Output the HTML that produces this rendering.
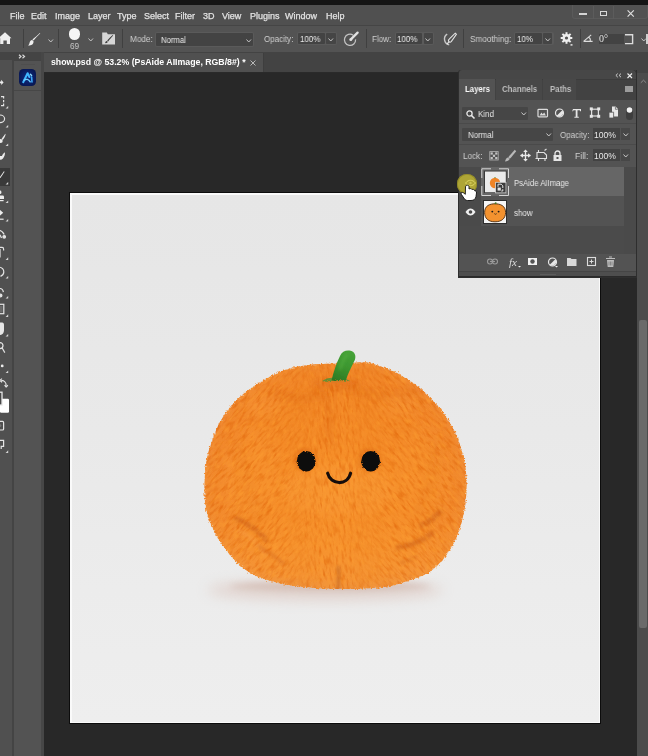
<!DOCTYPE html>
<html><head><meta charset="utf-8">
<style>
*{margin:0;padding:0;box-sizing:border-box}
html,body{width:648px;height:756px;overflow:hidden;background:#282828;font-family:"Liberation Sans",sans-serif;color:#d8d8d8}
.a{position:absolute}
.t{position:absolute;white-space:nowrap;font-size:9px;line-height:9px;color:#d6d6d6;transform-origin:0 0;will-change:transform}
.sep{position:absolute;width:1px;background:#404040}
.box{position:absolute;background:#444444}
svg{position:absolute;overflow:visible}
</style></head><body>
<!-- top black strip -->
<div class="a" style="left:0;top:0;width:648px;height:5px;background:#151515"></div>
<!-- menu bar -->
<div class="a" style="left:0;top:5px;width:648px;height:20px;background:#505050"></div>
<div class="a" style="left:0;top:25px;width:648px;height:1px;background:#454545"></div>
<div class="t" style="left:10px;top:11.5px;color:#e2e2e2;-webkit-text-stroke:0.25px currentColor">File</div>
<div class="t" style="left:31px;top:11.5px;color:#e2e2e2;-webkit-text-stroke:0.25px currentColor">Edit</div>
<div class="t" style="left:55px;top:11.5px;color:#e2e2e2;-webkit-text-stroke:0.25px currentColor">Image</div>
<div class="t" style="left:88px;top:11.5px;color:#e2e2e2;-webkit-text-stroke:0.25px currentColor">Layer</div>
<div class="t" style="left:117px;top:11.5px;color:#e2e2e2;-webkit-text-stroke:0.25px currentColor">Type</div>
<div class="t" style="left:144px;top:11.5px;color:#e2e2e2;-webkit-text-stroke:0.25px currentColor">Select</div>
<div class="t" style="left:175px;top:11.5px;color:#e2e2e2;-webkit-text-stroke:0.25px currentColor">Filter</div>
<div class="t" style="left:203px;top:11.5px;color:#e2e2e2;-webkit-text-stroke:0.25px currentColor">3D</div>
<div class="t" style="left:222px;top:11.5px;color:#e2e2e2;-webkit-text-stroke:0.25px currentColor">View</div>
<div class="t" style="left:250px;top:11.5px;color:#e2e2e2;-webkit-text-stroke:0.25px currentColor">Plugins</div>
<div class="t" style="left:285px;top:11.5px;color:#e2e2e2;-webkit-text-stroke:0.25px currentColor">Window</div>
<div class="t" style="left:326px;top:11.5px;color:#e2e2e2;-webkit-text-stroke:0.25px currentColor">Help</div>
<!-- window controls -->
<div class="a" style="left:572px;top:5px;width:76px;height:14px;border:1px solid #5a5a5a;border-top:none;border-radius:0 0 3px 3px;background:#525252"></div>
<div class="a" style="left:593px;top:6px;width:1px;height:13px;background:#5c5c5c"></div>
<div class="a" style="left:613px;top:6px;width:1px;height:13px;background:#5c5c5c"></div>
<div class="a" style="left:579px;top:13px;width:8px;height:1.8px;background:#d4d4d4"></div>
<div class="a" style="left:600px;top:10.5px;width:7px;height:5px;border:1.2px solid #d8d8d8;border-top-width:1.8px"></div>
<svg style="left:627px;top:9.5px" width="8" height="7"><path d="M0.6 0.4L6.8 6.6M6.8 0.4L0.6 6.6" stroke="#e0e0e0" stroke-width="1.15"/></svg>

<!-- options bar -->
<div class="a" style="left:0;top:26px;width:648px;height:26px;background:#535353"></div>
<svg style="left:0;top:31px" width="12" height="14"><path d="M-1.5 7.2L5 1.3L11.5 7.2L10 7.2L10 13L6.8 13L6.8 9.6L3.4 9.6L3.4 13L0.2 13L0.2 7.2Z" fill="#eeeeee"/></svg>
<div class="sep" style="left:23px;top:29px;height:19px"></div>
<div class="sep" style="left:58px;top:29px;height:19px"></div>
<div class="sep" style="left:122px;top:29px;height:19px"></div>
<div class="sep" style="left:366px;top:29px;height:19px"></div>
<div class="sep" style="left:463px;top:29px;height:19px"></div>
<div class="sep" style="left:580px;top:29px;height:19px"></div>
<svg style="left:28px;top:33px" width="13" height="13"><path d="M12.3 0.3C10.3 2.3 7.3 5.3 5.6 7.6L4.4 6.4C6.6 4.8 9.6 1.9 11.8 -0.1Z" fill="#eeeeee"/><path d="M4.2 6.9C2.5 7 1.8 8.4 1.5 9.9C1.3 11 0.8 11.8 0 12.4C2.3 12.7 5.4 11.9 5.6 8.4Z" fill="#eeeeee"/></svg>
<svg style="left:48px;top:38.5px" width="6" height="4"><path d="M0.5 0.5L2.75 3L5 0.5" stroke="#c4c4c4" stroke-width="1" fill="none"/></svg>
<div class="a" style="left:68.8px;top:28.2px;width:11.6px;height:11.6px;border-radius:50%;background:#f6f6f6"></div>
<div class="t" style="left:70px;top:41.5px;font-size:8.3px;color:#c4c4c4">69</div>
<svg style="left:87.8px;top:38px" width="6" height="4"><path d="M0.5 0.5L2.75 3L5 0.5" stroke="#c4c4c4" stroke-width="1" fill="none"/></svg>
<svg style="left:102px;top:32px" width="14" height="14"><path d="M0.2 0.6L4.8 0.6L5.8 2.2L13 2.2L13 12.4L0.2 12.4Z" fill="#d6d6d6"/><path d="M11.2 3.6C9.4 5.6 7.2 8 6.2 9.4L5.2 8.5C6.6 7.1 8.8 4.8 10.8 3.1Z" fill="#3a3a3a"/><path d="M4.9 9.1C3.9 9.1 3.4 10 3.1 11.1C4.6 11.3 5.7 10.6 5.7 9.7Z" fill="#3a3a3a"/></svg>
<div class="t" style="left:130px;top:35px;font-size:8.6px;color:#cfcfcf;transform:scaleX(0.95)">Mode:</div>
<div class="a" style="left:155px;top:32px;width:99px;height:15px;border-radius:2px;background:#5a5a5a"></div>
<div class="a" style="left:156px;top:33px;width:97px;height:13px;border-radius:1px;background:#434343"></div>
<div class="t" style="left:161px;top:36px;font-size:8.6px;color:#ececec;transform:scaleX(0.9)">Normal</div>
<svg style="left:246px;top:38.5px" width="6" height="4"><path d="M0.5 0.5L2.75 3L5 0.5" stroke="#c4c4c4" stroke-width="1" fill="none"/></svg>
<div class="t" style="left:264px;top:35px;font-size:8.6px;color:#cfcfcf;transform:scaleX(0.93)">Opacity:</div>
<div class="a" style="left:297px;top:32px;width:39.69999999999999px;height:13.200000000000003px;border-radius:2px;background:#5a5a5a"></div><div class="a" style="left:298px;top:33px;width:27px;height:11.200000000000003px;border-radius:1px;background:#434343"></div><div class="a" style="left:326.3px;top:33px;width:9.399999999999988px;height:11.200000000000003px;border-radius:1px;background:#454545"></div><div class="t" style="left:299.5px;top:35px;font-size:8.6px;color:#ececec;transform:scaleX(0.93)">100%</div><svg style="left:327.6px;top:38px" width="6" height="4"><path d="M0.5 0.5L2.75 3L5 0.5" stroke="#c4c4c4" stroke-width="1" fill="none"/></svg>
<svg style="left:343px;top:31px" width="16" height="16"><path d="M10.2 4.2A5.6 5.6 0 1 0 12.6 8.4" stroke="#c4c4c4" stroke-width="1.25" fill="none"/><path d="M14.6 1.6L8.6 7.6" stroke="#e2e2e2" stroke-width="2.3" stroke-linecap="round"/><circle cx="7.8" cy="8.4" r="1.5" fill="#e2e2e2"/></svg>
<div class="t" style="left:371.5px;top:35px;font-size:8.6px;color:#cfcfcf;transform:scaleX(0.93)">Flow:</div>
<div class="a" style="left:394.8px;top:32px;width:39.39999999999998px;height:13.200000000000003px;border-radius:2px;background:#5a5a5a"></div><div class="a" style="left:395.8px;top:33px;width:26.599999999999966px;height:11.200000000000003px;border-radius:1px;background:#434343"></div><div class="a" style="left:423.7px;top:33px;width:9.50000000000001px;height:11.200000000000003px;border-radius:1px;background:#454545"></div><div class="t" style="left:397px;top:35px;font-size:8.6px;color:#ececec;transform:scaleX(0.93)">100%</div><svg style="left:425.0px;top:38px" width="6" height="4"><path d="M0.5 0.5L2.75 3L5 0.5" stroke="#c4c4c4" stroke-width="1" fill="none"/></svg>
<svg style="left:441px;top:31px" width="17" height="16"><path d="M6.2 3.2A5.8 5.8 0 0 0 8.2 13.8" stroke="#c8c8c8" stroke-width="1.4" fill="none"/><path d="M14.2 2.2L15.4 3.4L10.4 10.4C9.8 11.2 9 11.4 8.4 11L7.6 10.2C7.2 9.6 7.4 8.8 8.2 8.2Z" stroke="#e2e2e2" stroke-width="1.1" fill="#535353"/><path d="M8 10.6L5.8 13.4" stroke="#e2e2e2" stroke-width="1.2"/></svg>
<div class="t" style="left:470px;top:35px;font-size:8.6px;color:#cfcfcf;transform:scaleX(0.95)">Smoothing:</div>
<div class="a" style="left:514px;top:32px;width:39.5px;height:13.200000000000003px;border-radius:2px;background:#5a5a5a"></div><div class="a" style="left:515px;top:33px;width:26.899999999999977px;height:11.200000000000003px;border-radius:1px;background:#434343"></div><div class="a" style="left:543.1999999999999px;top:33px;width:9.300000000000022px;height:11.200000000000003px;border-radius:1px;background:#454545"></div><div class="t" style="left:516.6px;top:35px;font-size:8.6px;color:#ececec;transform:scaleX(0.93)">10%</div><svg style="left:544.5px;top:38px" width="6" height="4"><path d="M0.5 0.5L2.75 3L5 0.5" stroke="#c4c4c4" stroke-width="1" fill="none"/></svg>
<svg style="left:560px;top:32px" width="14" height="14"><g fill="#eeeeee"><circle cx="6.5" cy="6" r="4"/><rect x="5.5" y="0.2" width="2" height="11.6"/><rect x="0.7" y="5" width="11.6" height="2"/><rect x="5.5" y="0.2" width="2" height="11.6" transform="rotate(45 6.5 6)"/><rect x="5.5" y="0.2" width="2" height="11.6" transform="rotate(-45 6.5 6)"/></g><circle cx="6.5" cy="6" r="1.6" fill="#535353"/><rect x="10.5" y="12.2" width="2" height="1.4" fill="#eee"/></svg>
<svg style="left:583px;top:34px" width="11" height="9"><path d="M0.6 7.4L9.6 7.4M0.6 7.4L8.2 0.9M5.6 3.2A3.2 3.2 0 0 1 6.9 7.4" stroke="#dcdcdc" stroke-width="1.1" fill="none"/></svg>
<div class="a" style="left:598.5px;top:33.6px;width:25.5px;height:10.4px;background:#434343"></div>
<div class="t" style="left:599px;top:34.2px;font-family:'Liberation Serif',serif;font-size:10px;color:#e6e6e6">0°</div>
<svg style="left:625px;top:34px" width="9" height="11"><path d="M0 0.8L7.6 0.8L7.6 9.6L0 9.6" stroke="#dcdcdc" stroke-width="1.4" fill="none"/></svg>
<svg style="left:641px;top:38px" width="6" height="4"><path d="M0.5 0.5L2.75 3L5 0.5" stroke="#c4c4c4" stroke-width="1" fill="none"/></svg>
<div class="a" style="left:646px;top:34px;width:2px;height:10px;background:#cfcfcf"></div>

<!-- tab strip -->
<div class="a" style="left:0;top:52px;width:648px;height:21px;background:#434343"></div>
<div class="a" style="left:44px;top:53px;width:219px;height:20px;background:#505050"></div><div class="a" style="left:263px;top:53px;width:1px;height:20px;background:#3e3e3e"></div><div class="a" style="left:44px;top:72px;width:592px;height:1px;background:#2a2a2a"></div>
<div class="t" style="left:51px;top:57.6px;font-weight:bold;font-size:8.75px;color:#ffffff">show.psd @ 53.2% (PsAide AIImage, RGB/8#) *</div>
<svg style="left:250px;top:60px" width="6" height="6"><path d="M0.5 0.5L5.5 5.5M5.5 0.5L0.5 5.5" stroke="#b8b8b8" stroke-width="1"/></svg>

<!-- left toolbars -->
<div class="a" style="left:0;top:52px;width:41px;height:8px;background:#444444"></div>
<svg style="left:18px;top:54px" width="8" height="5"><path d="M1 0.8L3 2.5L1 4.2M4.5 0.8L6.5 2.5L4.5 4.2" stroke="#d8d8d8" stroke-width="1.2" fill="none"/></svg>
<div class="a" style="left:0;top:60px;width:12px;height:696px;background:#505050"></div>
<div class="a" style="left:12px;top:60px;width:2px;height:696px;background:#444444"></div>
<div class="a" style="left:14px;top:61px;width:27px;height:695px;background:#535353"></div>
<div class="a" style="left:14px;top:90px;width:27px;height:1px;background:#474747"></div>
<div class="a" style="left:41px;top:52px;width:3px;height:704px;background:#474747"></div>
<!-- left tool icons (partially visible) -->
<div class="a" style="left:0;top:168.4px;width:9.6px;height:17.5px;background:#393939"></div>
<svg style="left:0;top:0;will-change:transform" width="12" height="460">
<g fill="#ececec">
<path d="M-1 81.6H1.2V79.8L3.6 82.4L1.2 85V83.2H-1Z"/>
<path d="M5.2 133.8C4 135.6 2.6 137.6 1.6 139L2.6 140C3.8 138.6 5 136.8 5.6 134.4Z"/><circle cx="0.6" cy="141" r="2.1"/>
<path d="M4.6 152.2C3.4 153.4 2.4 154.6 2 156L-1 156V160L1.8 159.6C3.6 158.2 4.6 156.6 5 153.6Z"/>
<path d="M3.9 171.3L-0.4 177.4L0.4 178L4.6 171.8Z"/>
<rect x="-2" y="190.5" width="3.4" height="3.6" rx="1.4"/><path d="M-2 195.5H3C3.8 195.5 4 196.5 4 197.3V199H-2Z"/><rect x="-2" y="200" width="5.6" height="1.2"/>
<path d="M-1 209L3.2 212.8L-1 216.6L-5 212.8Z"/><rect x="-1" y="218.6" width="4.6" height="1.2"/>
<circle cx="2.2" cy="365.9" r="1.4"/>
<rect x="0" y="398.8" width="9" height="14" rx="1.2" fill="#ffffff"/>
</g>
<g stroke="#e4e4e4" stroke-width="1.2" fill="none">
<path d="M1 96.6H3.6V98.6M3.6 100V102.2M3.6 103.6V105.6H1"/>
<ellipse cx="0" cy="118.8" rx="4.6" ry="3.8"/>
<path d="M-1 230C1 230.5 3 232 4.2 234.5" /><circle cx="4.2" cy="236.8" r="1.3" fill="#e4e4e4"/><path d="M-1 234C0 235 1 236.5 1.5 238"/>
<path d="M-2 247.4H2.2C3.2 247.4 3.6 248.2 3.6 249.2V250.4M0 249V257.4"/>
<path d="M-1 267C1.5 267.4 3.8 269.4 3.8 272C3.8 274 2.5 275.5 0.5 276.4"/>
<path d="M0 288.5C1.5 288.5 3 290 3.4 292.2"/><circle cx="0.5" cy="295.6" r="1.4" fill="#e4e4e4"/>
<rect x="-2" y="304.3" width="5.8" height="9.4"/>
<circle cx="0" cy="345.6" r="3"/><path d="M2.2 348L4.8 352.6"/>
<path d="M1.2 380.4C3.6 380.4 6.2 382 6.2 385.6M-0.2 380.4L2 378.6M-0.2 380.4L2 382.4M6.2 387.2L4.6 385.2M6.2 387.2L7.8 385.2"/>
<rect x="-2" y="421.4" width="5.6" height="8.6" rx="1"/>
<path d="M-2 440.4H3.6V446.4H1.2V449"/>
</g>
<rect x="-3" y="392.2" width="5" height="12.8" stroke="#e8e8e8" stroke-width="1.3" fill="#474747"/>
<rect x="-1" y="306" width="3.6" height="6.4" fill="#6a6a6a"/>
<path d="M-1 322.5H2.2C3.4 322.5 4 323.6 4 325V330C4 333 2.5 335 -1 335Z" fill="#e6e6e6"/>
<circle cx="-0.2" cy="425.6" r="1.5" fill="#777"/>
<path d="M5.6 108.6L8.2 108.6L8.2 106Z" fill="#d4d4d4"/><path d="M5.6 127.6L8.2 127.6L8.2 125Z" fill="#d4d4d4"/><path d="M5.6 146.1L8.2 146.1L8.2 143.5Z" fill="#d4d4d4"/><path d="M5.6 184.6L8.2 184.6L8.2 182Z" fill="#d4d4d4"/><path d="M5.6 203.1L8.2 203.1L8.2 200.5Z" fill="#d4d4d4"/><path d="M5.6 221.6L8.2 221.6L8.2 219Z" fill="#d4d4d4"/><path d="M5.6 259.90000000000003L8.2 259.90000000000003L8.2 257.3Z" fill="#d4d4d4"/><path d="M5.6 278.6L8.2 278.6L8.2 276Z" fill="#d4d4d4"/><path d="M5.6 298.6L8.2 298.6L8.2 296Z" fill="#d4d4d4"/><path d="M5.6 316.90000000000003L8.2 316.90000000000003L8.2 314.3Z" fill="#d4d4d4"/><path d="M5.6 336.6L8.2 336.6L8.2 334Z" fill="#d4d4d4"/><path d="M5.6 373.1L8.2 373.1L8.2 370.5Z" fill="#d4d4d4"/><path d="M5.6 452.90000000000003L8.2 452.90000000000003L8.2 450.3Z" fill="#d4d4d4"/>
</svg>
<!-- AI plugin icon -->
<div class="a" style="left:19px;top:69px;width:17px;height:17px;border-radius:4.5px;background:radial-gradient(circle at 50% 50%,#0f2a80 0%,#0a1d62 55%,#061244 100%)"></div>
<div class="a" style="left:21px;top:64px;width:14px;height:1px;background:#4e4e4e"></div>
<svg style="left:19px;top:69px" width="17" height="17"><path d="M4.2 13.2L8.6 4.2L10.4 8" stroke="#3fb6ff" stroke-width="2" fill="none" stroke-linecap="round" stroke-linejoin="round"/><path d="M5.2 11.2C7.5 9.8 9.5 10 11.2 12.8" stroke="#6fd0ff" stroke-width="1.4" fill="none" stroke-linecap="round"/><path d="M12.6 8L13 13" stroke="#3aa8f8" stroke-width="1.6" stroke-linecap="round"/><path d="M11.4 5.2L12.6 6.4" stroke="#8fdcff" stroke-width="1.4" stroke-linecap="round"/></svg>
<!-- canvas -->
<div class="a" style="left:69px;top:192px;width:532px;height:532px;background:#0c0c0c"></div>
<div class="a" style="left:70px;top:193px;width:530px;height:530px;background:#fafafa"></div>
<div class="a" style="left:72px;top:195px;width:527px;height:527px;background:linear-gradient(180deg,#e6e6e6 0%,#e9e9e9 45%,#ececec 75%,#eeeeee 100%)"></div>
<!-- orange plush -->
<svg style="left:72px;top:195px" width="527" height="527" viewBox="72 195 527 527">
<defs>
<radialGradient id="gBody" gradientUnits="userSpaceOnUse" cx="335" cy="490" r="150" fx="335" fy="480">
<stop offset="0" stop-color="#f7922c"/><stop offset="0.5" stop-color="#f58e2a"/><stop offset="0.82" stop-color="#f38c2e"/><stop offset="1" stop-color="#f08c36"/>
</radialGradient>
<linearGradient id="gLow" gradientUnits="userSpaceOnUse" x1="0" y1="360" x2="0" y2="590">
<stop offset="0" stop-color="#ec7a1c" stop-opacity="0.35"/><stop offset="0.35" stop-color="#ee7c20" stop-opacity="0.2"/><stop offset="0.55" stop-color="#f48a2c" stop-opacity="0"/><stop offset="0.8" stop-color="#f99c36" stop-opacity="0.3"/><stop offset="1" stop-color="#f5a048" stop-opacity="0.45"/>
</linearGradient>
<linearGradient id="gSide" gradientUnits="userSpaceOnUse" x1="205" y1="0" x2="466" y2="0">
<stop offset="0" stop-color="#e06a1a" stop-opacity="0.45"/><stop offset="0.18" stop-color="#e06a1a" stop-opacity="0"/><stop offset="0.82" stop-color="#e06a1a" stop-opacity="0"/><stop offset="1" stop-color="#e06a1a" stop-opacity="0.45"/>
</linearGradient>
<filter id="fFuzz" x="-5%" y="-5%" width="110%" height="110%">
<feTurbulence type="fractalNoise" baseFrequency="0.6" numOctaves="2" seed="3" result="n"/>
<feDisplacementMap in="SourceGraphic" in2="n" scale="5" xChannelSelector="R" yChannelSelector="G" result="d"/>
<feGaussianBlur in="d" stdDeviation="0.6"/>
</filter>
<filter id="fTex" x="0" y="0" width="100%" height="100%" color-interpolation-filters="sRGB">
<feTurbulence type="fractalNoise" baseFrequency="0.1 0.38" numOctaves="3" seed="7"/>
<feColorMatrix type="matrix" values="0 0 0 0 0.86  0 0 0 0 0.36  0 0 0 0 0.0  2.4 0 0 0 -1.1"/>
</filter>
<filter id="fTex2" x="0" y="0" width="100%" height="100%" color-interpolation-filters="sRGB">
<feTurbulence type="fractalNoise" baseFrequency="0.12 0.3" numOctaves="3" seed="11"/>
<feColorMatrix type="matrix" values="0 0 0 0 1  0 0 0 0 0.64  0 0 0 0 0.2  2.4 0 0 0 -1.15"/>
</filter>
<filter id="fBlur3" filterUnits="userSpaceOnUse" x="150" y="300" width="400" height="350"><feGaussianBlur stdDeviation="3"/></filter>
<filter id="fBlur5" filterUnits="userSpaceOnUse" x="150" y="300" width="400" height="350"><feGaussianBlur stdDeviation="5"/></filter>
<filter id="fBlur2" filterUnits="userSpaceOnUse" x="150" y="300" width="400" height="350"><feGaussianBlur stdDeviation="1.6"/></filter>
<filter id="fBlur8" filterUnits="userSpaceOnUse" x="100" y="450" width="500" height="250"><feGaussianBlur stdDeviation="7"/></filter>
<filter id="fBlurEdge" filterUnits="userSpaceOnUse" x="150" y="300" width="400" height="350"><feGaussianBlur stdDeviation="0.7"/></filter>
<linearGradient id="gStem" gradientUnits="userSpaceOnUse" x1="350" y1="351" x2="338" y2="381">
<stop offset="0" stop-color="#46a238"/><stop offset="0.5" stop-color="#3c962f"/><stop offset="1" stop-color="#2e7a24"/>
</linearGradient>
<filter id="fEye" x="-20%" y="-20%" width="140%" height="140%">
<feTurbulence type="fractalNoise" baseFrequency="0.9" numOctaves="1" seed="5" result="n"/>
<feDisplacementMap in="SourceGraphic" in2="n" scale="3.2" xChannelSelector="R" yChannelSelector="G" result="d"/>
<feGaussianBlur in="d" stdDeviation="0.75"/>
</filter>
<linearGradient id="gmL" gradientUnits="userSpaceOnUse" x1="200" y1="0" x2="470" y2="0"><stop offset="0" stop-color="#fff"/><stop offset="0.3" stop-color="#fff"/><stop offset="0.45" stop-color="#000"/></linearGradient>
<linearGradient id="gmC" gradientUnits="userSpaceOnUse" x1="200" y1="0" x2="470" y2="0"><stop offset="0.3" stop-color="#000"/><stop offset="0.45" stop-color="#fff"/><stop offset="0.55" stop-color="#fff"/><stop offset="0.7" stop-color="#000"/></linearGradient>
<linearGradient id="gmR" gradientUnits="userSpaceOnUse" x1="200" y1="0" x2="470" y2="0"><stop offset="0.55" stop-color="#000"/><stop offset="0.7" stop-color="#fff"/><stop offset="1" stop-color="#fff"/></linearGradient>
<mask id="mL" maskUnits="userSpaceOnUse" x="150" y="300" width="400" height="350"><rect x="150" y="300" width="400" height="350" fill="url(#gmL)"/></mask>
<mask id="mC" maskUnits="userSpaceOnUse" x="150" y="300" width="400" height="350"><rect x="150" y="300" width="400" height="350" fill="url(#gmC)"/></mask>
<mask id="mR" maskUnits="userSpaceOnUse" x="150" y="300" width="400" height="350"><rect x="150" y="300" width="400" height="350" fill="url(#gmR)"/></mask>
<clipPath id="cBody"><path d="M345.0 363.5 C352.2 363.2 359.2 361.8 365.0 362.2 C370.8 362.6 374.9 364.5 380.0 366.2 C385.1 367.9 390.2 369.7 395.4 372.3 C400.5 374.9 406.3 378.5 410.9 381.6 C415.5 384.7 419.3 387.5 423.2 390.9 C427.1 394.2 430.6 398.1 434.0 401.7 C437.4 405.3 440.5 408.6 443.3 412.5 C446.1 416.4 448.7 420.7 451.0 424.8 C453.3 428.9 455.4 432.8 457.2 437.2 C459.0 441.6 460.5 446.5 461.8 451.0 C463.1 455.5 464.2 459.2 465.0 464.0 C465.8 468.8 466.3 474.5 466.5 480.0 C466.7 485.5 466.6 491.1 466.1 497.0 C465.6 502.9 464.7 509.4 463.3 515.6 C461.9 521.8 460.0 528.5 457.8 534.0 C455.6 539.5 453.5 543.9 450.4 548.9 C447.3 553.9 443.6 559.4 439.3 563.7 C435.0 568.0 430.3 571.7 424.4 574.8 C418.5 577.9 410.8 580.2 404.0 582.2 C397.2 584.2 392.7 585.9 383.7 587.0 C374.7 588.1 361.4 588.9 350.0 589.0 C338.6 589.1 324.6 588.5 315.0 587.9 C305.4 587.3 299.1 586.6 292.2 585.6 C285.3 584.6 279.8 583.4 273.6 581.7 C267.4 580.0 260.5 578.2 255.1 575.6 C249.7 573.0 245.3 569.6 241.2 566.3 C237.1 562.9 233.7 559.4 230.4 555.5 C227.1 551.6 224.0 547.4 221.2 543.1 C218.4 538.9 215.7 534.5 213.5 530.0 C211.3 525.5 209.2 521.0 207.8 516.0 C206.4 511.0 205.3 505.7 204.8 500.0 C204.3 494.3 204.4 487.8 204.6 482.0 C204.8 476.2 205.1 470.7 205.8 465.4 C206.5 460.1 207.8 454.2 208.9 450.0 C210.0 445.8 211.0 443.9 212.3 440.2 C213.7 436.5 215.2 431.8 217.0 427.9 C218.8 424.0 220.8 420.7 223.1 417.1 C225.4 413.5 227.8 409.9 230.9 406.3 C234.0 402.7 237.8 398.9 241.7 395.5 C245.5 392.1 249.4 389.3 254.0 386.2 C258.6 383.1 264.2 379.7 269.4 377.0 C274.5 374.3 279.8 371.8 284.9 370.0 C290.0 368.2 293.8 367.2 300.0 366.2 C306.2 365.2 314.5 364.4 322.0 364.0 C329.5 363.6 337.8 363.8 345.0 363.5Z"/></clipPath>
</defs>
<ellipse cx="325" cy="590" rx="118" ry="10" fill="#d0b0a4" opacity="0.45" filter="url(#fBlur8)"/>
<ellipse cx="330" cy="586" rx="100" ry="4.5" fill="#b88a78" opacity="0.3" filter="url(#fBlur3)"/>
<g filter="url(#fFuzz)">
<path d="M345.0 363.5 C352.2 363.2 359.2 361.8 365.0 362.2 C370.8 362.6 374.9 364.5 380.0 366.2 C385.1 367.9 390.2 369.7 395.4 372.3 C400.5 374.9 406.3 378.5 410.9 381.6 C415.5 384.7 419.3 387.5 423.2 390.9 C427.1 394.2 430.6 398.1 434.0 401.7 C437.4 405.3 440.5 408.6 443.3 412.5 C446.1 416.4 448.7 420.7 451.0 424.8 C453.3 428.9 455.4 432.8 457.2 437.2 C459.0 441.6 460.5 446.5 461.8 451.0 C463.1 455.5 464.2 459.2 465.0 464.0 C465.8 468.8 466.3 474.5 466.5 480.0 C466.7 485.5 466.6 491.1 466.1 497.0 C465.6 502.9 464.7 509.4 463.3 515.6 C461.9 521.8 460.0 528.5 457.8 534.0 C455.6 539.5 453.5 543.9 450.4 548.9 C447.3 553.9 443.6 559.4 439.3 563.7 C435.0 568.0 430.3 571.7 424.4 574.8 C418.5 577.9 410.8 580.2 404.0 582.2 C397.2 584.2 392.7 585.9 383.7 587.0 C374.7 588.1 361.4 588.9 350.0 589.0 C338.6 589.1 324.6 588.5 315.0 587.9 C305.4 587.3 299.1 586.6 292.2 585.6 C285.3 584.6 279.8 583.4 273.6 581.7 C267.4 580.0 260.5 578.2 255.1 575.6 C249.7 573.0 245.3 569.6 241.2 566.3 C237.1 562.9 233.7 559.4 230.4 555.5 C227.1 551.6 224.0 547.4 221.2 543.1 C218.4 538.9 215.7 534.5 213.5 530.0 C211.3 525.5 209.2 521.0 207.8 516.0 C206.4 511.0 205.3 505.7 204.8 500.0 C204.3 494.3 204.4 487.8 204.6 482.0 C204.8 476.2 205.1 470.7 205.8 465.4 C206.5 460.1 207.8 454.2 208.9 450.0 C210.0 445.8 211.0 443.9 212.3 440.2 C213.7 436.5 215.2 431.8 217.0 427.9 C218.8 424.0 220.8 420.7 223.1 417.1 C225.4 413.5 227.8 409.9 230.9 406.3 C234.0 402.7 237.8 398.9 241.7 395.5 C245.5 392.1 249.4 389.3 254.0 386.2 C258.6 383.1 264.2 379.7 269.4 377.0 C274.5 374.3 279.8 371.8 284.9 370.0 C290.0 368.2 293.8 367.2 300.0 366.2 C306.2 365.2 314.5 364.4 322.0 364.0 C329.5 363.6 337.8 363.8 345.0 363.5Z" fill="url(#gBody)"/>
</g>
<g clip-path="url(#cBody)">
<rect x="190" y="350" width="290" height="250" fill="url(#gLow)"/>
<rect x="190" y="350" width="290" height="250" fill="url(#gSide)" opacity="0.2"/>
<!-- edge darkening -->
<path d="M345.0 363.5 C352.2 363.2 359.2 361.8 365.0 362.2 C370.8 362.6 374.9 364.5 380.0 366.2 C385.1 367.9 390.2 369.7 395.4 372.3 C400.5 374.9 406.3 378.5 410.9 381.6 C415.5 384.7 419.3 387.5 423.2 390.9 C427.1 394.2 430.6 398.1 434.0 401.7 C437.4 405.3 440.5 408.6 443.3 412.5 C446.1 416.4 448.7 420.7 451.0 424.8 C453.3 428.9 455.4 432.8 457.2 437.2 C459.0 441.6 460.5 446.5 461.8 451.0 C463.1 455.5 464.2 459.2 465.0 464.0 C465.8 468.8 466.3 474.5 466.5 480.0 C466.7 485.5 466.6 491.1 466.1 497.0 C465.6 502.9 464.7 509.4 463.3 515.6 C461.9 521.8 460.0 528.5 457.8 534.0 C455.6 539.5 453.5 543.9 450.4 548.9 C447.3 553.9 443.6 559.4 439.3 563.7 C435.0 568.0 430.3 571.7 424.4 574.8 C418.5 577.9 410.8 580.2 404.0 582.2 C397.2 584.2 392.7 585.9 383.7 587.0 C374.7 588.1 361.4 588.9 350.0 589.0 C338.6 589.1 324.6 588.5 315.0 587.9 C305.4 587.3 299.1 586.6 292.2 585.6 C285.3 584.6 279.8 583.4 273.6 581.7 C267.4 580.0 260.5 578.2 255.1 575.6 C249.7 573.0 245.3 569.6 241.2 566.3 C237.1 562.9 233.7 559.4 230.4 555.5 C227.1 551.6 224.0 547.4 221.2 543.1 C218.4 538.9 215.7 534.5 213.5 530.0 C211.3 525.5 209.2 521.0 207.8 516.0 C206.4 511.0 205.3 505.7 204.8 500.0 C204.3 494.3 204.4 487.8 204.6 482.0 C204.8 476.2 205.1 470.7 205.8 465.4 C206.5 460.1 207.8 454.2 208.9 450.0 C210.0 445.8 211.0 443.9 212.3 440.2 C213.7 436.5 215.2 431.8 217.0 427.9 C218.8 424.0 220.8 420.7 223.1 417.1 C225.4 413.5 227.8 409.9 230.9 406.3 C234.0 402.7 237.8 398.9 241.7 395.5 C245.5 392.1 249.4 389.3 254.0 386.2 C258.6 383.1 264.2 379.7 269.4 377.0 C274.5 374.3 279.8 371.8 284.9 370.0 C290.0 368.2 293.8 367.2 300.0 366.2 C306.2 365.2 314.5 364.4 322.0 364.0 C329.5 363.6 337.8 363.8 345.0 363.5Z" fill="none" stroke="#f5a050" stroke-width="8" opacity="0.3" filter="url(#fBlur5)"/>
<!-- light face region -->
<ellipse cx="338" cy="490" rx="58" ry="26" fill="#fa9e3c" opacity="0.4" filter="url(#fBlur5)"/>
<ellipse cx="250" cy="470" rx="30" ry="45" fill="#f99a3a" opacity="0.25" filter="url(#fBlur5)"/>
<ellipse cx="425" cy="470" rx="28" ry="45" fill="#f99a3a" opacity="0.2" filter="url(#fBlur5)"/>
<!-- top segment shading -->
<path d="M270 392C286 398 308 400 326 394" stroke="#da6414" stroke-width="7" fill="none" opacity="0.35" filter="url(#fBlur3)"/>
<path d="M352 390C370 396 395 396 420 390" stroke="#da6414" stroke-width="7" fill="none" opacity="0.3" filter="url(#fBlur3)"/>
<path d="M330 396C329 410 328 425 330 445" stroke="#da6414" stroke-width="6" fill="none" opacity="0.3" filter="url(#fBlur3)"/>
<ellipse cx="336" cy="384" rx="24" ry="7" fill="#d86414" opacity="0.35" filter="url(#fBlur3)"/>
<ellipse cx="262" cy="405" rx="22" ry="12" fill="#f99c40" opacity="0.3" filter="url(#fBlur5)"/>
<ellipse cx="400" cy="405" rx="22" ry="12" fill="#f99c40" opacity="0.25" filter="url(#fBlur5)"/>
<path d="M236 440C244 470 250 500 262 520" stroke="#dc6a18" stroke-width="6" fill="none" opacity="0.18" filter="url(#fBlur5)"/>
<path d="M440 440C434 470 426 495 416 515" stroke="#dc6a18" stroke-width="6" fill="none" opacity="0.18" filter="url(#fBlur5)"/>
<!-- grooves lower -->
<path d="M234 518C246 522 258 530 268 542" stroke="#cc5e14" stroke-width="5" fill="none" opacity="0.6" filter="url(#fBlur2)"/>
<path d="M238 530C250 536 260 546 266 556" stroke="#f9a24e" stroke-width="4" fill="none" opacity="0.35" filter="url(#fBlur2)"/>
<path d="M258 546C268 552 278 558 284 564" stroke="#cf6016" stroke-width="3.5" fill="none" opacity="0.4" filter="url(#fBlur2)"/>
<path d="M442 510C436 517 430 522 420 526" stroke="#cc5e14" stroke-width="5" fill="none" opacity="0.6" filter="url(#fBlur2)"/>
<path d="M434 532C424 540 410 546 396 548" stroke="#cc5e14" stroke-width="5" fill="none" opacity="0.55" filter="url(#fBlur2)"/>
<path d="M417 556C412 559 406 562 400 563" stroke="#cf6016" stroke-width="3" fill="none" opacity="0.4" filter="url(#fBlur2)"/>
<path d="M338 566C339 574 339 581 338 590" stroke="#b85a1a" stroke-width="3" fill="none" opacity="0.6" filter="url(#fBlur2)"/>
<path d="M225 568C270 594 410 596 455 566" stroke="#e0883e" stroke-width="6" fill="none" opacity="0.2" filter="url(#fBlur3)"/>
<g mask="url(#mL)"><g transform="rotate(-50 260 470)"><rect x="90" y="300" width="340" height="340" filter="url(#fTex)" opacity="0.6"/><rect x="90" y="300" width="340" height="340" filter="url(#fTex2)" opacity="0.5"/></g></g>
<g mask="url(#mC)"><g transform="rotate(80 335 470)"><rect x="165" y="300" width="340" height="340" filter="url(#fTex)" opacity="0.6"/><rect x="165" y="300" width="340" height="340" filter="url(#fTex2)" opacity="0.5"/></g></g>
<g mask="url(#mR)"><g transform="rotate(50 410 470)"><rect x="240" y="300" width="340" height="340" filter="url(#fTex)" opacity="0.6"/><rect x="240" y="300" width="340" height="340" filter="url(#fTex2)" opacity="0.5"/></g></g>
</g>
<!-- stem -->
<path d="M322 381C326 378 331 377 336 378C341 377 346 378 350 381C344 383.5 328 383.5 322 381Z" fill="#4c9438" opacity="0.8" filter="url(#fBlurEdge)"/>
<path d="M331.5 380.5C333.5 372 336.5 363 340 356C342 351.5 346.2 349.8 350.6 350.8C354.8 352 356.4 355.8 354.8 360C352 366 348 373 345.8 380.5C340.5 382.3 336 382.3 331.5 380.5Z" fill="url(#gStem)" filter="url(#fBlurEdge)"/>
<path d="M340 370C341.5 364 344 358 347.5 354" stroke="#5cb646" stroke-width="3" fill="none" opacity="0.45" filter="url(#fBlur2)"/>
<!-- fur lip over stem base -->
<path d="M324 383C329 379.5 335 381.5 339 380C344 381.5 350 379.5 356 383C350 385.5 330 385.5 324 383Z" fill="#ea7a20" filter="url(#fFuzz)" opacity="0.9"/>
<!-- face -->
<ellipse cx="305" cy="460" rx="12" ry="12.5" fill="#d8620e" opacity="0.35" filter="url(#fBlur2)"/>
<ellipse cx="369.5" cy="460" rx="12" ry="12.5" fill="#d8620e" opacity="0.35" filter="url(#fBlur2)"/>
<g filter="url(#fEye)">
<ellipse cx="306.2" cy="461.2" rx="9.4" ry="10.2" fill="#0e0a08"/>
<ellipse cx="370.7" cy="461.2" rx="9.4" ry="10.2" fill="#0e0a08"/>
</g>
<path d="M327.6 473.2C330.5 485.2 347.5 486.2 350.6 473.2" stroke="#140c08" stroke-width="3.1" fill="none" stroke-linecap="round" filter="url(#fBlurEdge)"/>
</svg>
<!-- ===== Layers panel ===== -->
<div class="a" style="left:458px;top:69.5px;width:179px;height:208.5px;background:#2e2e2e;border-radius:3px 4px 0 0"></div>
<div class="a" style="left:459px;top:70px;width:177px;height:9px;background:#474747;border-radius:3px 4px 0 0"></div>
<svg style="left:614.5px;top:73.2px" width="7" height="5"><path d="M2.8 0.6L0.9 2.4L2.8 4.2M6 0.6L4.1 2.4L6 4.2" stroke="#dedede" stroke-width="0.9" fill="none"/></svg>
<svg style="left:627.3px;top:72.8px" width="6" height="6"><path d="M0.5 0.5L5 5M5 0.5L0.5 5" stroke="#ececec" stroke-width="1.1"/></svg>
<div class="a" style="left:459px;top:79px;width:177px;height:21px;background:#424242"></div><div class="a" style="left:459px;top:78.5px;width:177px;height:1px;background:#3c3c3c"></div>
<div class="a" style="left:459px;top:79px;width:36px;height:21px;background:#535353"></div>
<div class="a" style="left:496px;top:79px;width:46px;height:21px;background:#484848"></div>
<div class="a" style="left:543px;top:79px;width:33px;height:21px;background:#484848"></div>
<div class="t" style="left:465px;top:84.5px;font-weight:bold;font-size:8.7px;color:#f8f8f8;transform:scaleX(0.89)">Layers</div>
<div class="t" style="left:502px;top:84.5px;font-weight:bold;font-size:8.7px;color:#bdbdbd;transform:scaleX(0.9)">Channels</div>
<div class="t" style="left:550px;top:84.5px;font-weight:bold;font-size:8.7px;color:#bdbdbd;transform:scaleX(0.9)">Paths</div>
<div class="a" style="left:625px;top:86px;width:8px;height:6px;background:#9c9c9c"></div>
<!-- body -->
<div class="a" style="left:459px;top:100px;width:177px;height:67px;background:#535353"></div>
<div class="a" style="left:462px;top:107px;width:66px;height:13px;background:#464646;border-radius:1px"></div>
<svg style="left:466px;top:110px" width="10" height="9"><circle cx="3.5" cy="3.5" r="2.6" stroke="#e8e8e8" stroke-width="1.3" fill="none"/><path d="M5.5 5.5L8.5 8.5" stroke="#e8e8e8" stroke-width="1.6"/></svg>
<div class="t" style="left:478px;top:109.5px;font-size:8.7px;color:#e6e6e6;transform:scaleX(0.92)">Kind</div>
<svg style="left:521px;top:112px" width="6" height="4"><path d="M0.5 0.5L2.75 3L5 0.5" stroke="#c8c8c8" stroke-width="1" fill="none"/></svg>
<!-- filter icons -->
<svg style="left:537px;top:108px" width="100" height="14">
<rect x="1" y="1.3" width="9.5" height="7.5" rx="0.8" stroke="#dcdcdc" stroke-width="1.2" fill="none"/>
<path d="M2.6 7.4L4.4 4.6L5.8 6.2L7.2 4.4L8.9 7.4Z" fill="#dcdcdc"/>
<circle cx="22.5" cy="5" r="4" stroke="#e6e6e6" stroke-width="1.2" fill="none"/>
<path d="M25.3 2.2A4 4 0 0 1 19.7 7.8Z" fill="#e6e6e6"/>
<path d="M36 1h8v2.2h-0.8l-0.5 -1h-2.2v6.6h1.3v1h-4.4v-1h1.3v-6.6h-2.2l-0.5 1h-0.8z" fill="#e6e6e6"/>
<rect x="54.6" y="1.2" width="6.8" height="6.8" stroke="#e0e0e0" stroke-width="1.2" fill="none"/><rect x="52.8" y="-0.6" width="3" height="3" fill="#e6e6e6"/><rect x="60.2" y="-0.6" width="3" height="3" fill="#e6e6e6"/><rect x="52.8" y="6.8" width="3" height="3" fill="#e6e6e6"/><rect x="60.2" y="6.8" width="3" height="3" fill="#e6e6e6"/>
<path d="M75 -1.5h3.6l2.4 2.4v7.6h-6z" fill="#e6e6e6"/><path d="M78.4 -1.3v2.6h2.4" stroke="#535353" stroke-width="0.7" fill="none"/><path d="M72 4.2h4.6v5.8h-4.6z" fill="#e6e6e6" stroke="#535353" stroke-width="0.8"/>
<rect x="89" y="-1" width="7" height="13" rx="3.5" fill="#3e3e3e"/><circle cx="92.5" cy="2" r="2.8" fill="#f2f2f2"/>
</svg>
<div class="a" style="left:459px;top:123px;width:177px;height:1px;background:#4a4a4a"></div>
<div class="a" style="left:462px;top:128px;width:91px;height:13px;background:#464646;border-radius:1px"></div>
<div class="t" style="left:467.5px;top:131px;font-size:8.6px;color:#e6e6e6;transform:scaleX(0.92)">Normal</div>
<svg style="left:546px;top:133px" width="6" height="4"><path d="M0.5 0.5L2.75 3L5 0.5" stroke="#c8c8c8" stroke-width="1" fill="none"/></svg>
<div class="t" style="left:560px;top:130.5px;font-size:8.6px;color:#cfcfcf;transform:scaleX(0.93)">Opacity:</div>
<div class="box" style="left:593px;top:128px;width:27px;height:12px;background:#424242"></div>
<div class="box" style="left:621px;top:128px;width:9px;height:12px;background:#474747"></div>
<div class="t" style="left:594px;top:130.5px;font-size:8.6px;color:#e6e6e6">100%</div>
<svg style="left:623px;top:133px" width="6" height="4"><path d="M0.5 0.5L2.75 3L5 0.5" stroke="#c8c8c8" stroke-width="1" fill="none"/></svg>
<div class="a" style="left:459px;top:144px;width:177px;height:1px;background:#4a4a4a"></div>
<div class="t" style="left:463px;top:151.5px;font-size:8.6px;color:#cfcfcf;transform:scaleX(0.95)">Lock:</div>
<svg style="left:488px;top:149px" width="80" height="13">
<rect x="1.8" y="2.6" width="8.4" height="8.4" stroke="#b4b4b4" stroke-width="0.8" fill="none"/>
<g fill="#c4c4c4"><rect x="2.6" y="3.4" width="2.2" height="2.2"/><rect x="7.2" y="3.4" width="2.2" height="2.2"/><rect x="4.9" y="5.7" width="2.2" height="2.2"/><rect x="2.6" y="8" width="2.2" height="2.2"/><rect x="7.2" y="8" width="2.2" height="2.2"/></g>
<path d="M26.8 0.8C24.4 3.4 22 6.2 20.2 8.4L21.8 9.8C23.8 7.8 26 5 28.2 2.2Z" fill="#b8b8b8"/><path d="M19.9 8.6C18.3 8.8 17.8 10.6 17 12.4C19 12.2 21.2 11.4 21.6 10Z" fill="#b8b8b8"/>
<path d="M37.5 1.5v10M32.6 6.5h9.8" stroke="#e8e8e8" stroke-width="1.3"/><path d="M35.2 3L37.5 0.4L39.8 3ZM35.2 10L37.5 12.6L39.8 10ZM35 4.2L32.2 6.5L35 8.8ZM40 4.2L42.8 6.5L40 8.8Z" fill="#e8e8e8"/>
<path d="M49 3.5h7l2.5 2.5v3.5h-9.5zM50.5 1v2.5M50.5 9.5v2.5M57 9.5v2.5M47.5 9.5h2M56.5 1.5l2 -1.5" stroke="#e0e0e0" stroke-width="1.1" fill="none"/>
<rect x="65.5" y="6" width="8" height="6" fill="#e6e6e6"/><path d="M67 6.5v-2a2.5 2.5 0 0 1 5 0v2" stroke="#e6e6e6" stroke-width="1.3" fill="none"/><rect x="68.5" y="8" width="2" height="2" fill="#535353"/>
</svg>
<div class="t" style="left:575px;top:151.5px;font-size:8.6px;color:#cfcfcf">Fill:</div>
<div class="box" style="left:593px;top:149px;width:27px;height:12px;background:#424242"></div>
<div class="box" style="left:621px;top:149px;width:9px;height:12px;background:#474747"></div>
<div class="t" style="left:594px;top:151.5px;font-size:8.6px;color:#e6e6e6">100%</div>
<svg style="left:623px;top:154px" width="6" height="4"><path d="M0.5 0.5L2.75 3L5 0.5" stroke="#c8c8c8" stroke-width="1" fill="none"/></svg>
<!-- layer list -->
<div class="a" style="left:459px;top:167px;width:177px;height:87px;background:#4b4b4b"></div>
<div class="a" style="left:459px;top:167px;width:22px;height:59px;background:#4a4a4a"></div>
<div class="a" style="left:481px;top:167px;width:143px;height:29px;background:#666666"></div>
<div class="a" style="left:481px;top:196px;width:143px;height:30px;background:#535353"></div>
<div class="a" style="left:624px;top:167px;width:12px;height:87px;background:#4a4a4a"></div>
<!-- thumb 1 -->
<svg style="left:481px;top:168px" width="29" height="29">
<path d="M0.8 10V0.8H10M18 0.8H27.5V10M27.5 18V27.5H18M10 27.5H0.8V18" stroke="#d4d4d4" stroke-width="1" fill="none"/>
<rect x="3.2" y="2.7" width="22.3" height="22.3" fill="#2e2e2e"/>
<rect x="4" y="3.5" width="20.8" height="20.8" fill="#ebebeb"/>
<circle cx="14" cy="15" r="5.2" fill="#ef8426"/>
<path d="M14 10.2v-1.2" stroke="#5a8a30" stroke-width="1"/>
<rect x="14.6" y="14.3" width="10.4" height="10.6" fill="#3c3c3c" stroke="#d8d8d8" stroke-width="0.8"/>
<path d="M17 16.2h3.2l1.6 1.6v2.2M17 16.2v2.6" stroke="#e4e4e4" stroke-width="1" fill="none"/><rect x="16.6" y="19.6" width="3.2" height="3" fill="#e4e4e4"/><path d="M21.8 21.2v1.8h-1.6" stroke="#e4e4e4" stroke-width="1" fill="none"/>
</svg>
<div class="t" style="left:513.5px;top:179px;font-size:8.6px;color:#e8e8e8;transform:scaleX(0.9)">PsAide AIImage</div>
<!-- thumb 2 -->
<div class="a" style="left:483px;top:200px;width:24px;height:23.5px;background:#2e2e2e"></div>
<div class="a" style="left:484px;top:201px;width:22px;height:21.5px;background:#f6f6f6"></div>
<svg style="left:483px;top:200px" width="24" height="24"><path d="M12 3.8C17 3.8 22.6 5.5 22.6 12.5C22.6 18.5 18.5 21.8 12 21.8C5.5 21.8 1.6 18.5 1.6 12.5C1.6 5.5 7 3.8 12 3.8Z" fill="#f4922f" stroke="#4a2a10" stroke-width="0.9"/><path d="M12.4 4.2L12.8 2.4" stroke="#3f7a22" stroke-width="1.6"/><circle cx="9.3" cy="11.6" r="0.95" fill="#1a1a1a"/><circle cx="15.6" cy="11.6" r="0.95" fill="#1a1a1a"/><path d="M11.3 13.6Q12.5 15 13.7 13.6" stroke="#1a1a1a" stroke-width="0.7" fill="none"/></svg>
<div class="t" style="left:513.5px;top:209px;font-size:8.6px;color:#e8e8e8;transform:scaleX(0.93)">show</div>
<svg style="left:465px;top:208px" width="11" height="8"><path d="M0.5 4C2 1.5 4 0.5 5.5 0.5S9 1.5 10.5 4C9 6.5 7 7.5 5.5 7.5S2 6.5 0.5 4Z" fill="#f0f0f0"/><circle cx="5.5" cy="4" r="1.8" fill="#4a4a4a"/></svg>
<!-- cursor highlight -->
<div class="a" style="left:457px;top:174.4px;width:19.6px;height:19.6px;border-radius:50%;background:#aea536;box-shadow:inset 0 0 0 0.8px #8f8826"></div>
<svg style="left:455px;top:168px" width="30" height="40"><path d="M10.5 15C12 13 14 12.3 15.5 12.3S19 13 20.5 15C19 17 17 17.7 15.5 17.7S12 17 10.5 15Z" stroke="#e6de6a" stroke-width="1" fill="none" opacity="0.8"/><circle cx="15.5" cy="15" r="1.2" fill="#d8d060" opacity="0.7"/>
<path d="M12.3 17.2C13.3 17.2 14 17.8 14 18.8L14 21C15 20.3 16.5 20.5 17 21.5C18 21 19.5 21.5 19.8 22.8C20.8 22.7 21.6 23.5 21.5 25L21 28.5C20.5 31 19 32.5 16 32.5L12.5 32.5C11 32.5 10 31.5 9 30.3L6.5 26.5C5.8 25.5 6.2 24.3 7.3 24.4C8.2 24.5 9.2 25.3 10.3 26.3L10.5 19C10.5 17.8 11.3 17.2 12.3 17.2Z" fill="#ffffff" stroke="#111" stroke-width="0.9"/></svg>
<!-- bottom toolbar -->
<div class="a" style="left:459px;top:254px;width:177px;height:17px;background:#535353"></div>
<div class="a" style="left:459px;top:271px;width:177px;height:1px;background:#454545"></div><div class="a" style="left:459px;top:272px;width:177px;height:5px;background:#4e4e4e"></div><div class="a" style="left:540px;top:273.5px;width:16px;height:1.5px;background:#5c5c5c"></div>
<svg style="left:485px;top:255px;will-change:transform" width="135" height="15">
<g stroke="#9a9a9a" stroke-width="1.1" fill="none"><rect x="2.5" y="4" width="5" height="5" rx="2.5"/><rect x="7.5" y="4" width="5" height="5" rx="2.5"/><path d="M5 6.5h5"/></g>
<text x="24" y="11" font-family="Liberation Serif,serif" font-style="italic" font-size="11" fill="#dcdcdc">fx</text>
<path d="M33 11h3l-1.5 1.5z" fill="#f0f0f0"/>
<rect x="43" y="3" width="9" height="7" fill="#f0f0f0"/><circle cx="47.5" cy="6.5" r="2.2" fill="#535353"/>
<circle cx="67.5" cy="7" r="4" stroke="#e6e6e6" stroke-width="1.2" fill="none"/><path d="M70.3 4.2A4 4 0 0 1 64.7 9.8Z" fill="#e6e6e6"/><path d="M70 11h3l-1.5 1.5z" fill="#f0f0f0"/>
<path d="M82 3h3.5l1 1h5v7h-9.5z" fill="#d8d8d8"/>
<rect x="102.5" y="2.5" width="8" height="8" stroke="#dcdcdc" stroke-width="1.1" fill="none"/><path d="M104.5 6.5h4M106.5 4.5v4" stroke="#dcdcdc" stroke-width="1"/>
<path d="M121 3.5h9M124 2h3" stroke="#bdbdbd" stroke-width="1.2"/><path d="M122 5h7l-0.7 7h-5.6z" fill="#bdbdbd"/><path d="M124 6.5v4M125.5 6.5v4M127 6.5v4" stroke="#535353" stroke-width="0.5"/>
</svg>
<div class="a" style="left:459px;top:276px;width:177px;height:1px;background:#2a2a2a"></div>
<!-- right scrollbar column -->
<div class="a" style="left:636px;top:70px;width:1px;height:208px;background:#2e2e2e"></div>
<div class="a" style="left:637px;top:73px;width:11px;height:683px;background:#4c4c4c"></div>
<svg style="left:640px;top:79px" width="8" height="5"><path d="M0.8 3.8L3.5 1.2L6.2 3.8" stroke="#8c8c8c" stroke-width="1" fill="none"/></svg>
<div class="a" style="left:638.5px;top:319.5px;width:8.5px;height:308px;border-radius:2px;background:#6a6a6a"></div>
</body></html>
